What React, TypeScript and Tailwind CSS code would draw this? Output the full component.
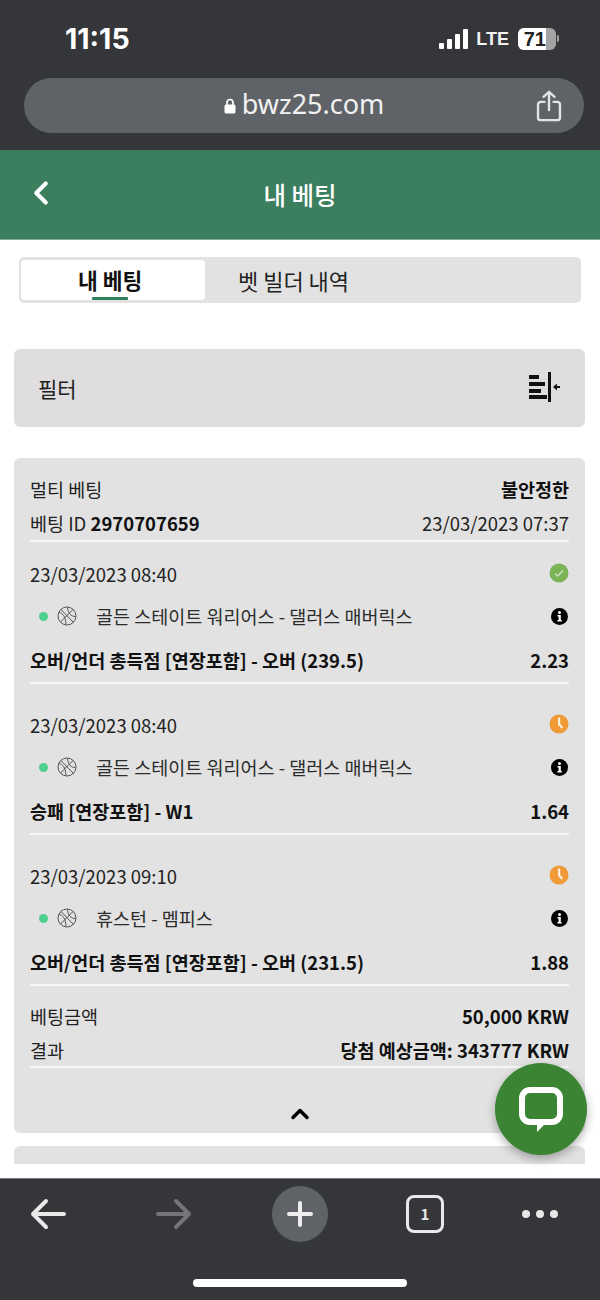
import { ChevronLeft, ChevronUp } from "lucide-react";

const legs = [
  {
    date: "23/03/2023 08:40",
    status: "won",
    teams: "골든 스테이트 워리어스 - 댈러스 매버릭스",
    market: "오버/언더 총득점 [연장포함] - 오버 (239.5)",
    odds: "2.23",
  },
  {
    date: "23/03/2023 08:40",
    status: "pending",
    teams: "골든 스테이트 워리어스 - 댈러스 매버릭스",
    market: "승패 [연장포함] - W1",
    odds: "1.64",
  },
  {
    date: "23/03/2023 09:10",
    status: "pending",
    teams: "휴스턴 - 멤피스",
    market: "오버/언더 총득점 [연장포함] - 오버 (231.5)",
    odds: "1.88",
  },
];

const StatusIcon = ({ status }: { status: string }) =>
  status === "won" ? (
    <svg className="-mt-[2px]" width="20" height="20" viewBox="0 0 20 20">
      <circle cx="10" cy="10" r="9.5" fill="#7cb356" />
      <path d="M6 10.500l2.800 2.600L14 7.500" fill="none" stroke="#cfe3bf" strokeWidth="1.400" />
    </svg>
  ) : (
    <svg className="-mt-[2px]" width="20" height="20" viewBox="0 0 20 20">
      <circle cx="10" cy="10" r="9.500" fill="#f09a37" />
      <path d="M9 3.500h2.200v6.200l3 3.500-1.700 1.500-3.500-4z" fill="#fbeedd" />
    </svg>
  );

const InfoIcon = () => (
  <svg width="17" height="17" viewBox="0 0 17 17">
    <circle cx="8.500" cy="8.500" r="8.500" fill="#000" />
    <circle cx="8.500" cy="4.600" r="1.500" fill="#fff" />
    <path d="M6.500 7h3.300v5h1v1.600H6.400V12h1.200V8.600H6.500z" fill="#fff" />
  </svg>
);

const BallIcon = () => (
  <svg width="20" height="20" viewBox="0 0 20 20" fill="none" stroke="#555" strokeWidth="1">
    <circle cx="10" cy="10" r="9" />
    <path d="M4 3.500l12.500 13M16 3.500L3.500 16M2 6.500c3.500 .5 6.500 3.500 7 12M10.500 1.500c.5 6 3.500 9 8 9" />
  </svg>
);

const FilterIcon = () => (
  <svg width="32" height="32" viewBox="0 0 32 32" fill="#111">
    <rect x="1" y="3" width="10" height="4" />
    <rect x="1" y="10" width="16" height="4" />
    <rect x="1" y="17" width="12" height="4" />
    <rect x="1" y="23" width="18" height="4" />
    <rect x="20" y="0" width="3" height="30" />
    <rect x="27" y="14" width="5" height="2" />
    <path d="M25 15l4-3.500v7z" />
  </svg>
);

const BetLeg = ({ leg, first }: { leg: (typeof legs)[number]; first: boolean }) => (
  <div className={first ? "h-[142px] flex flex-col border-b-2 border-[#f6f6f6]" : "mt-[9px] h-[142px] flex flex-col border-b-2 border-[#f6f6f6]"}>
    <div className="mt-[21px] h-[24px] pb-[2px] flex items-center justify-between">
      <span>{leg.date}</span>
      <StatusIcon status={leg.status} />
    </div>
    <div className="mt-[18px] h-[24px] pb-[2px] flex items-center justify-between text-[#2c2c2c]">
      <div className="flex items-center">
        <span className="ml-[9px] w-[9px] h-[9px] rounded-full bg-[#4fcf8e]" />
        <span className="ml-[9px] flex"><BallIcon /></span>
        <span className="ml-[19px]">{leg.teams}</span>
      </div>
      <span className="mr-[1px] flex"><InfoIcon /></span>
    </div>
    <div className="mt-[20px] h-[24px] pb-[2px] flex items-center justify-between font-bold text-[#111]">
      <span>{leg.market}</span>
      <span>{leg.odds}</span>
    </div>
  </div>
);

export default function App() {
  return (
    <div className="relative w-[600px] h-[1300px] overflow-hidden bg-white text-[18.5px] leading-6 text-[#222] font-['Noto_Sans_CJK_KR','Noto_Sans',sans-serif]">
      {/* browser top */}
      <div className="h-[150px] bg-[#35363a] flex flex-col">
        <div className="h-[78px] flex items-center justify-between pl-[65px] pr-[41px] pb-[1px]">
          <span className="text-[28.5px] font-bold text-white font-['Inter',sans-serif]">11:15</span>
          <div className="flex items-center">
            <div className="flex items-end gap-[3px] h-[20px]">
              <span className="w-[5px] h-[6px] rounded-[1px] bg-white" />
              <span className="w-[5px] h-[10px] rounded-[1px] bg-white" />
              <span className="w-[5px] h-[15px] rounded-[1px] bg-white" />
              <span className="w-[5px] h-[20px] rounded-[1px] bg-white" />
            </div>
            <span className="ml-[8px] text-[18px] font-bold text-[#f2f2f2] font-['Liberation_Sans',sans-serif]">LTE</span>
            <div className="ml-[9px] w-[38px] h-[22px] rounded-[6px] bg-[#a3a3a3] overflow-hidden">
              <div className="w-[28px] h-full bg-white flex items-center justify-end text-[20px] font-bold text-[#222] font-['Liberation_Sans',sans-serif]">
                71
              </div>
            </div>
            <span className="ml-[1px] w-[2px] h-[7px] rounded-r-[2px] bg-[#a3a3a3]" />
          </div>
        </div>
        <div className="ml-[24px] mr-[16px] h-[55px] rounded-[28px] bg-[#5f6368] relative flex items-center justify-center pb-[3px]">
          <svg className="mr-[6px] mt-[3px]" width="12" height="16" viewBox="0 0 12 16">
            <path d="M3 7V4.500a3 3 0 0 1 6 0V7" fill="none" stroke="#fff" strokeWidth="1.700" />
            <rect x="0.500" y="6.500" width="11" height="9" rx="1.500" fill="#fff" />
          </svg>
          <span className="text-[27px] text-[#f1f1f1] font-['Noto_Sans',sans-serif]">bwz25.com</span>
          <svg className="absolute right-[22px] top-[12px]" width="26" height="32" viewBox="0 0 28 35" fill="none" stroke="#e4e4e4" strokeWidth="2.600" strokeLinecap="round" strokeLinejoin="round">
            <path d="M9 13H5a3 3 0 0 0-3 3v14a3 3 0 0 0 3 3h18a3 3 0 0 0 3-3V16a3 3 0 0 0-3-3h-4" />
            <path d="M14 22V2M8 7.500L14 2l6 5.500" />
          </svg>
        </div>
      </div>

      {/* page header */}
      <div className="h-[90px] bg-[#3b7f5f] relative flex items-center justify-center border-b border-[#8aa999]">
        <ChevronLeft size={38} strokeWidth={2.600} className="absolute left-[22px] top-[24px] text-white" />
        <span className="text-[24.5px] font-medium text-white">내 베팅</span>
      </div>

      {/* tabs */}
      <div className="mt-[17px] mx-[19px] h-[46px] rounded-[5px] bg-[#e2e2e2] p-[2px] pt-[3px] flex items-start">
        <div className="relative w-[184px] h-[40px] rounded-[4px] bg-white flex items-center pl-[57px] text-[21.5px] font-bold text-[#111]">
          내 베팅
          <span className="absolute left-[71px] bottom-0 w-[36px] h-[3px] rounded-[1px] bg-[#2f7f5c]" />
        </div>
        <div className="ml-[33px] h-[40px] flex items-center text-[22px] text-[#222]">벳 빌더 내역</div>
      </div>

      {/* filter */}
      <div className="mt-[46px] mx-[14px] w-[571px] h-[78px] rounded-[6px] bg-[#dfdddd] flex items-center justify-between pl-[24px] pr-[25px]">
        <span className="text-[21px] text-[#222]">필터</span>
        <FilterIcon />
      </div>

      {/* bet card */}
      <div className="mt-[31px] mx-[14px] w-[571px] h-[675px] rounded-[6px] bg-[#e2e2e2] px-[16px] pt-[20px] flex flex-col">
        <div className="h-[24px] pb-[2px] flex justify-between items-center">
          <span>멀티 베팅</span>
          <span className="font-bold text-[#111]">불안정한</span>
        </div>
        <div className="mt-[10px] h-[30px] pb-[6px] flex justify-between items-center border-b-2 border-[#f6f6f6]">
          <span>베팅 ID <b className="text-[#111]">2970707659</b></span>
          <span>23/03/2023 07:37</span>
        </div>
        {legs.map((leg, i) => (
          <BetLeg key={i} leg={leg} first={i === 0} />
        ))}
        <div className="mt-[19px] h-[24px] pb-[2px] flex justify-between items-center">
          <span>베팅금액</span>
          <span className="font-bold text-[#111]">50,000 KRW</span>
        </div>
        <div className="mt-[10px] h-[24px] pb-[2px] flex justify-between items-center">
          <span>결과</span>
          <span className="font-bold text-[#111]">당첨 예상금액: 343777 KRW</span>
        </div>
        <div className="mt-[3px] border-b-2 border-[#f6f6f6]" />
        <div className="mt-[32px] flex justify-center">
          <ChevronUp size={28} strokeWidth={3} className="text-black" />
        </div>
      </div>

      {/* next card, cut off by the browser bar */}
      <div className="mt-[13px] mx-[14px] w-[571px] h-[18px] rounded-t-[6px] bg-[#e2e2e2]" />

      {/* chat button */}
      <div className="absolute left-[495px] top-[1063px] w-[92px] h-[92px] rounded-full bg-[#3a8433] shadow-[0_4px_10px_rgba(0,0,0,0.3)] flex items-center justify-center pt-[2px]">
        <svg width="44" height="46" viewBox="0 0 44 46" fill="none">
          <rect x="3" y="3" width="38" height="32" rx="8" stroke="#fff" strokeWidth="6" />
          <path d="M18 33h12L18 45z" fill="#fff" />
        </svg>
      </div>

      {/* browser bottom */}
      <div className="absolute left-0 right-0 bottom-0 h-[122px] bg-[#35363a] border-t border-[#77797c]">
        <div className="h-[70px] flex items-center pl-[30px]">
          <svg width="36" height="32" viewBox="0 0 36 32" fill="none" stroke="#e9e9e9" strokeWidth="4" strokeLinecap="round" strokeLinejoin="round">
            <path d="M34 16H3M16 3L3 16l13 13" />
          </svg>
          <svg className="ml-[90px]" width="36" height="32" viewBox="0 0 36 32" fill="none" stroke="#737578" strokeWidth="4" strokeLinecap="round" strokeLinejoin="round">
            <path d="M2 16h31M20 3l13 13-13 13" />
          </svg>
          <div className="ml-[80px] w-[56px] h-[56px] rounded-full bg-[#5f6368] flex items-center justify-center">
            <svg width="26" height="26" viewBox="0 0 26 26" stroke="#eee" strokeWidth="4" strokeLinecap="round">
              <path d="M13 2v22M2 13h22" />
            </svg>
          </div>
          <div className="ml-[78px] w-[38px] h-[38px] rounded-[8px] border-[3px] border-[#e9e9e9] flex items-center justify-center text-[15px] font-bold text-[#e9e9e9]">
            1
          </div>
          <div className="ml-[78px] flex gap-[6px]">
            <span className="w-[8px] h-[8px] rounded-full bg-[#e9e9e9]" />
            <span className="w-[8px] h-[8px] rounded-full bg-[#e9e9e9]" />
            <span className="w-[8px] h-[8px] rounded-full bg-[#e9e9e9]" />
          </div>
        </div>
        <div className="mt-[30px] mx-auto w-[214px] h-[8px] rounded-full bg-white" />
      </div>
    </div>
  );
}
